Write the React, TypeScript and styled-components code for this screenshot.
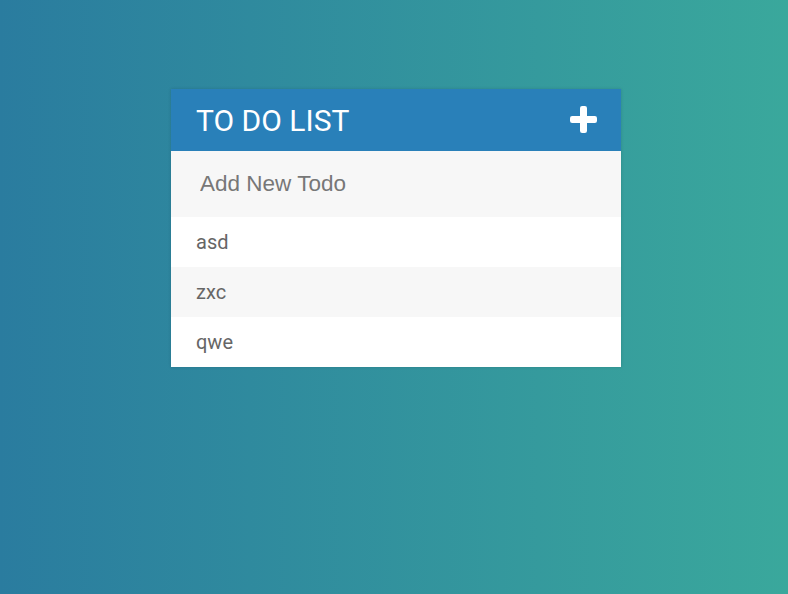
import React from "react";
import styled, { createGlobalStyle } from "styled-components";

const Global = createGlobalStyle`
  html, body { margin: 0; padding: 0; }
  body {
    min-height: 594px;
    font-family: Roboto, "Liberation Sans", sans-serif;
    background: linear-gradient(90deg, #2a7c9f 0%, #3aa89c 100%);
    background-attachment: fixed;
  }
`;

const Page = styled.div`
  min-height: 594px;
  padding-top: 89px;
  padding-left: 171px;
  box-sizing: border-box;
`;

const Card = styled.div`
  width: 450px;
  background: #fff;
  box-shadow: 0 0 3px rgba(0, 0, 0, 0.15);
`;

const Header = styled.div`
  height: 62px;
  background: #2980b9;
  display: flex;
  align-items: center;
  justify-content: space-between;
  padding: 0 24px 0 25px;
  box-sizing: border-box;
`;

const Title = styled.h1`
  margin: 0;
  font-size: 30px;
  font-weight: 400;
  color: #fff;
  line-height: 1;
  padding-top: 2px;
`;

const PlusBtn = styled.span`
  display: flex;
  width: 27px;
  height: 27px;
  margin-bottom: 2px;
`;

const Input = styled.input`
  display: block;
  width: 100%;
  height: 66px;
  box-sizing: border-box;
  border: none;
  outline: none;
  background: #f7f7f7;
  padding: 0 0 1px 29px;
  font-family: "Liberation Sans", Arial, sans-serif;
  font-size: 22.5px;
  color: #666;
  &::placeholder { color: #777; opacity: 1; }
`;

const List = styled.ul`
  list-style: none;
  margin: 0;
  padding: 0;
`;

const Item = styled.li<{ $alt: boolean }>`
  height: 50px;
  display: flex;
  align-items: center;
  padding-left: 25px;
  font-size: 20px;
  color: #666;
  background: ${(p) => (p.$alt ? "#f7f7f7" : "#fff")};
`;

const todos = ["asd", "zxc", "qwe"];

export default function App() {
  return (
    <>
      <Global />
      <Page>
        <Card>
          <Header>
            <Title>TO DO LIST</Title>
            <PlusBtn>
              <svg viewBox="0 0 27 27" width="27" height="27">
                <rect x="10" y="0" width="7" height="27" rx="2.2" fill="#fff" />
                <rect x="0" y="10" width="27" height="7" rx="2.2" fill="#fff" />
              </svg>
            </PlusBtn>
          </Header>
          <Input placeholder="Add New Todo" />
          <List>
            {todos.map((t, i) => (
              <Item key={t} $alt={i % 2 === 1}>{t}</Item>
            ))}
          </List>
        </Card>
      </Page>
    </>
  );
}
